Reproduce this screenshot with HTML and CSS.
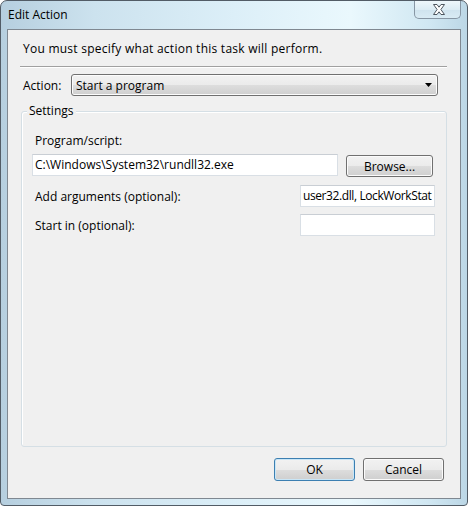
FILE: index.html
```html
<!DOCTYPE html>
<html>
<head>
<meta charset="utf-8">
<link rel="stylesheet" href="styles.css">
</head>
<body>
<div class="window">
  <div class="titlebar">
    <span class="title">Edit Action</span>
    <div class="close">
      <svg width="14" height="11" viewBox="0 0 14 11"><path d="M1.5 0.5 H5 L7 3.2 L9 0.5 H12.5 L8.9 5.5 L12.5 10.5 H9 L7 7.8 L5 10.5 H1.5 L5.1 5.5 Z" fill="#ffffff" stroke="#4d565f" stroke-width="1" stroke-linejoin="round"/></svg>
    </div>
  </div>
  <div class="client">
    <p class="intro">You must specify what action this task will perform.</p>
    <div class="sep"></div>
    <div class="action-row">
      <span class="action-label">Action:</span>
      <div class="select">
        <span>Start a program</span>
        <svg class="arrow" width="7" height="4" viewBox="0 0 7 4"><path d="M0 0 H7 L3.5 4 Z" fill="#000"/></svg>
      </div>
    </div>
    <div class="group">
      <span class="legend">Settings</span>
      <div class="field-label">Program/script:</div>
      <div class="prog-row">
        <div class="input wide">C:\Windows\System32\rundll32.exe</div>
        <div class="btn browse">Browse...</div>
      </div>
      <div class="row args">
        <span>Add arguments (optional):</span>
        <div class="input short tight">user32.dll, LockWorkStat</div>
      </div>
      <div class="row startin">
        <span>Start in (optional):</span>
        <div class="input short"></div>
      </div>
    </div>
    <div class="buttons">
      <div class="btn default">OK</div>
      <div class="btn">Cancel</div>
    </div>
  </div>
</div>
</body>
</html>
```
FILE: styles.css
```css
html, body {
  margin: 0;
  padding: 0;
  background: #ffffff;
}
body {
  font-family: "Open Sans", "Noto Sans", sans-serif;
  font-size: 12px;
  color: #000;
}
.window {
  width: 468px;
  height: 506px;
  box-sizing: border-box;
  border: 1px solid #525c66;
  border-radius: 7px 7px 4px 4px;
  background: linear-gradient(to right, #b6cfdf 0%, #cce2ee 20%, #dceff8 50%, #eaf8fd 75%, #d0e7f2 92%, #bcd7e6 100%);
  display: flex;
  flex-direction: column;
  overflow: hidden;
}
.titlebar {
  height: 28px;
  display: flex;
  justify-content: space-between;
  align-items: flex-start;
  padding-left: 7px;
}
.title {
  line-height: 16px;
  margin-top: 6px;
}
.close {
  width: 47px;
  height: 18px;
  box-sizing: border-box;
  margin-right: 6px;
  border: 1px solid #8796a4;
  border-top: none;
  border-radius: 0 0 5px 5px;
  background: linear-gradient(to bottom, #eef7fb, #dcecf4 50%, #cfe3ee 51%, #d9ebf4);
  display: flex;
  align-items: center;
  justify-content: center;
  padding-left: 2px;
}
.client {
  margin: 0 6px 6px;
  height: 470px;
  box-sizing: border-box;
  border: 1px solid #7f8891;
  background: #f0f0f0;
  display: flex;
  flex-direction: column;
}
.intro {
  margin: 11px 0 0 15px;
  line-height: 16px;
  letter-spacing: 0.25px;
}
.sep {
  margin: 9px 13px 0 12px;
  border-top: 1px solid #a0a0a0;
  border-bottom: 1px solid #ffffff;
}
.action-row {
  margin-top: 6px;
  padding-left: 15px;
  display: flex;
  align-items: center;
}
.action-label {
  width: 48px;
}
.select {
  width: 367px;
  height: 22px;
  box-sizing: border-box;
  border: 1px solid #707070;
  border-radius: 3px;
  background: linear-gradient(to bottom, #f2f2f2 0%, #ebebeb 50%, #dddddd 51%, #cfcfcf 100%);
  box-shadow: inset 0 0 0 1px #fcfcfc;
  display: flex;
  align-items: center;
  justify-content: space-between;
  padding: 0 4px 0 4px;
}
.arrow {
  margin-right: 1px;
}
.group {
  flex: 1;
  margin: 15px 13px 0 13px;
  border: 1px solid #d5dfe5;
  border-radius: 3px;
  box-shadow: inset 1px 1px 0 #ffffff;
  display: flex;
  flex-direction: column;
  padding: 0 11px 0 10px;
}
.legend {
  align-self: flex-start;
  margin: -9px 0 0 -5px;
  padding: 0 2px;
  line-height: 16px;
  background: #f0f0f0;
}
.field-label {
  margin-top: 14px;
  padding-left: 3px;
  line-height: 16px;
}
.prog-row {
  margin-top: 5px;
  display: flex;
  align-items: flex-start;
}
.input {
  height: 22px;
  box-sizing: border-box;
  border: 1px solid #d9dfe5;
  border-top-color: #c9ced4;
  background: #ffffff;
  padding: 0 2px;
  line-height: 20px;
  white-space: nowrap;
  overflow: hidden;
}
.wide {
  width: 306px;
}
.short {
  width: 135px;
}
.tight {
  letter-spacing: -0.4px;
  padding: 0 1px 0 2px;
}
.btn {
  height: 22px;
  box-sizing: border-box;
  border: 1px solid #707070;
  border-radius: 3px;
  background: linear-gradient(to bottom, #f2f2f2 0%, #ebebeb 50%, #dddddd 51%, #cfcfcf 100%);
  box-shadow: inset 0 0 0 1px #fbfbfb;
  display: flex;
  align-items: center;
  justify-content: center;
}
.browse {
  width: 87px;
  margin: 1px 0 0 8px;
}
.row {
  display: flex;
  justify-content: space-between;
  align-items: center;
  padding-left: 3px;
}
.args {
  margin-top: 8px;
}
.startin {
  margin-top: 7px;
}
.buttons {
  margin: 11px 16px 17px 0;
  display: flex;
  justify-content: flex-end;
  gap: 8px;
}
.buttons .btn {
  width: 81px;
  height: 23px;
}
.buttons .default {
  border-color: #3c7fb1;
  box-shadow: inset 0 0 0 1px #c9e6f7;
}
```
